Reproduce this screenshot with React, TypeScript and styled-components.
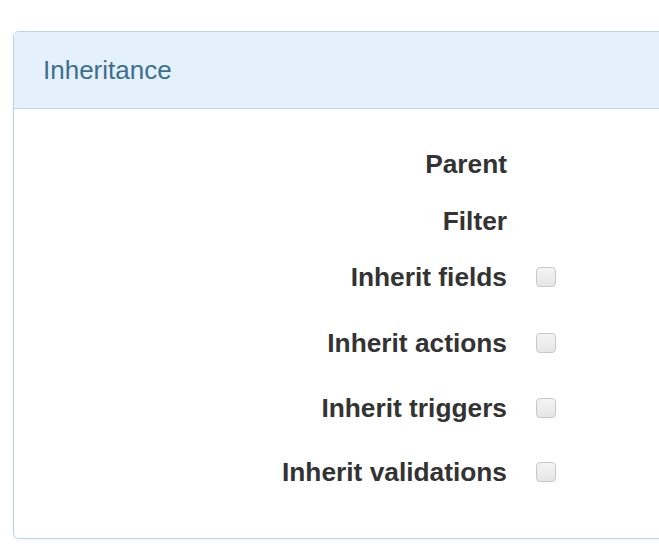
import React from "react";
import styled, { createGlobalStyle } from "styled-components";

const Global = createGlobalStyle`
  html, body { margin: 0; padding: 0; background: #fff; overflow: hidden; }
  body { font-family: "Liberation Sans", Arial, sans-serif; color: #333; }
`;

const Page = styled.div`
  padding: 31px 0 0 13px;
  overflow: hidden;
  height: 555px;
  box-sizing: border-box;
`;

const Panel = styled.section`
  margin-right: -30px;
  border: 1px solid #bcd6e6;
  border-radius: 6px;
  background: #fff;
  box-shadow: 0 1px 2px rgba(0, 0, 0, 0.05);
  height: 508px;
  box-sizing: border-box;
`;

const Header = styled.header`
  height: 77px;
  box-sizing: border-box;
  display: flex;
  align-items: center;
  padding: 0 0 0 29px;
  background: #e4f1fc;
  border-bottom: 1px solid #bcd6e6;
  border-radius: 5px 5px 0 0;
`;

const Title = styled.h3`
  margin: 0;
  font-weight: 400;
  font-size: 26px;
  color: #3d6f90;
`;

const Form = styled.div`
  display: flex;
  flex-direction: column;
  padding-top: 35px;
`;

const Row = styled.div<{ $mt: number }>`
  display: grid;
  grid-template-columns: 493px 40px;
  column-gap: 29px;
  align-items: center;
  height: 40px;
  margin-top: ${(p) => p.$mt}px;
`;

const Label = styled.label`
  text-align: right;
  font-weight: 700;
  font-size: 26.3px;
  color: #333;
  white-space: nowrap;
`;

const Check = styled.span`
  display: block;
  width: 20px;
  height: 20px;
  box-sizing: border-box;
  border: 1px solid #c8c8c8;
  border-radius: 4px;
  background: linear-gradient(#f4f4f4, #e6e6e6);
`;

const rows: { label: string; check: boolean; mt: number }[] = [
  { label: "Parent", check: false, mt: 0 },
  { label: "Filter", check: false, mt: 17 },
  { label: "Inherit fields", check: true, mt: 16 },
  { label: "Inherit actions", check: true, mt: 26 },
  { label: "Inherit triggers", check: true, mt: 25 },
  { label: "Inherit validations", check: true, mt: 24 },
];

export default function App() {
  return (
    <Page>
      <Global />
      <Panel>
        <Header>
          <Title>Inheritance</Title>
        </Header>
        <Form>
          {rows.map((r) => (
            <Row key={r.label} $mt={r.mt}>
              <Label>{r.label}</Label>
              {r.check ? <Check /> : <span />}
            </Row>
          ))}
        </Form>
      </Panel>
    </Page>
  );
}
